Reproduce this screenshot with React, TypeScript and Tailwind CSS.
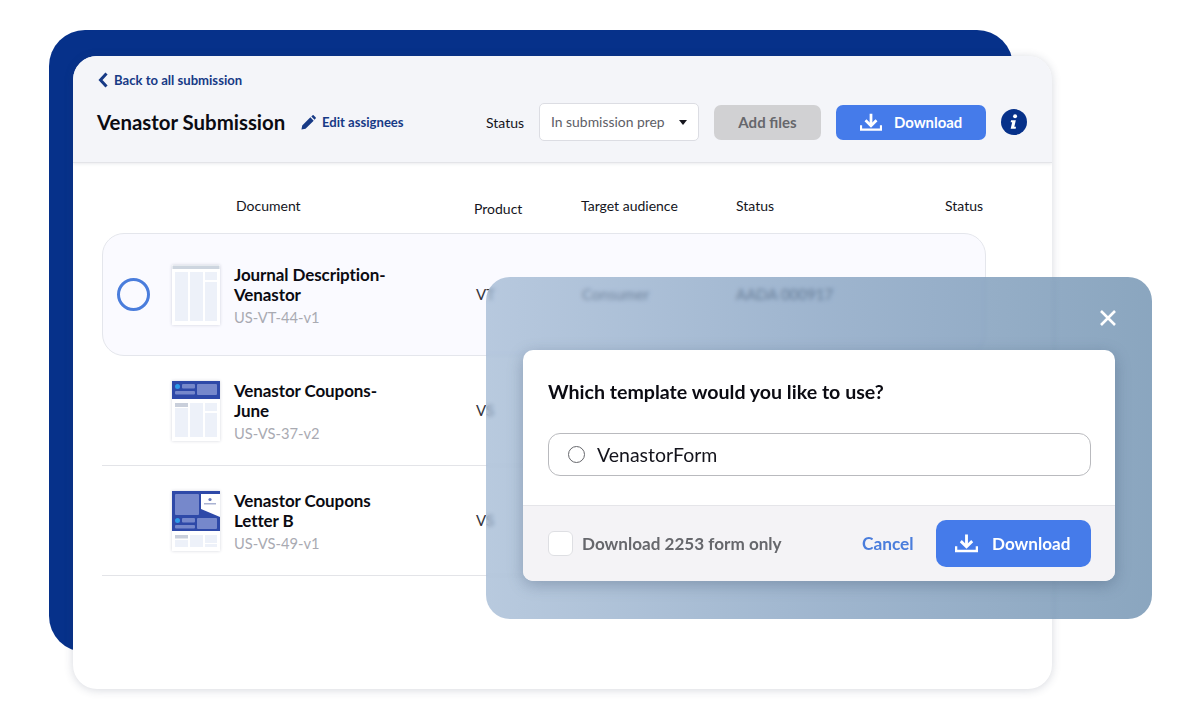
import React from "react";

const DownloadIcon = ({ className }: { className: string }) => (
  <svg viewBox="0 0 24 20" className={className} fill="none" stroke="currentColor" strokeWidth="3">
    <path d="M12 0.5V12.5" />
    <path d="M6 7.5L12 13.5L18 7.5" />
    <path d="M1 13V17.8H23V13" strokeWidth="2.6" />
  </svg>
);

const Thumb = ({ kind }: { kind: 0 | 1 | 2 }) => {
  if (kind === 0)
    return (
      <svg viewBox="0 0 48 60" className="w-12 h-[60px] shrink-0">
        <rect width="48" height="60" fill="#fff" />
        <rect x="0.5" y="0.5" width="47" height="3.5" fill="#cdd5df" />
        <rect x="3" y="7" width="13" height="49" fill="#edf1f9" />
        <rect x="18" y="7" width="13" height="49" fill="#edf1f9" />
        <rect x="33" y="7" width="12" height="8" fill="#edf1f9" />
        <rect x="33" y="17" width="12" height="39" fill="#edf1f9" />
      </svg>
    );
  if (kind === 1)
    return (
      <svg viewBox="0 0 48 60" className="w-12 h-[60px] shrink-0">
        <rect width="48" height="60" fill="#fff" />
        <rect width="48" height="18" fill="#2e49a8" />
        <circle cx="5.5" cy="5.5" r="2.5" fill="#2f9be8" />
        <rect x="10" y="3" width="13" height="4.5" rx="1" fill="#7688cb" />
        <rect x="3" y="10" width="20" height="3.5" rx="1" fill="#7688cb" />
        <rect x="25" y="3" width="20" height="11" rx="1" fill="#7688cb" />
        <rect x="3" y="22" width="13" height="4" fill="#c9cfdb" />
        <rect x="3" y="27" width="13" height="29" fill="#edf1f9" />
        <rect x="18" y="22" width="13" height="34" fill="#edf1f9" />
        <rect x="33" y="22" width="12" height="8" fill="#edf1f9" />
        <rect x="33" y="32" width="12" height="24" fill="#edf1f9" />
      </svg>
    );
  return (
    <svg viewBox="0 0 48 60" className="w-12 h-[60px] shrink-0">
      <rect width="48" height="60" fill="#fff" />
      <rect width="48" height="40" fill="#2e49a8" />
      <rect x="3" y="3" width="24" height="21" rx="1" fill="#7688cb" />
      <path d="M29 3H48V26L29 18Z" fill="#fff" />
      <circle cx="38" cy="8.5" r="1.6" fill="#6878b8" />
      <rect x="32" y="12" width="12" height="1.5" fill="#a9b2d2" />
      <circle cx="5.5" cy="29.5" r="2.5" fill="#2f9be8" />
      <rect x="10" y="27" width="13" height="4.5" rx="1" fill="#7688cb" />
      <rect x="3" y="34" width="20" height="3.5" rx="1" fill="#7688cb" />
      <rect x="25" y="27" width="20" height="11" rx="1" fill="#7688cb" />
      <rect x="3" y="44" width="13" height="3.5" fill="#c9cfdb" />
      <rect x="3" y="49" width="13" height="7" fill="#edf1f9" />
      <rect x="18" y="44" width="13" height="12" fill="#edf1f9" />
      <rect x="33" y="44" width="12" height="8" fill="#edf1f9" />
      <rect x="33" y="53" width="12" height="3" fill="#edf1f9" />
    </svg>
  );
};

const DocCell = ({ kind, l1, l2, id }: { kind: 0 | 1 | 2; l1: string; l2: string; id: string }) => (
  <div className="flex items-center gap-[14px] w-[304px] shrink-0">
    <div className="shadow-[0_0_3px_rgba(60,70,100,0.22)]">
      <Thumb kind={kind} />
    </div>
    <div className="pt-[3px]">
      <div className="text-[17px] leading-[20px] font-bold text-[#0b0b12] tracking-[-0.1px]">{l1}</div>
      <div className="text-[17px] leading-[20px] font-bold text-[#0b0b12] tracking-[-0.1px]">{l2}</div>
      <div className="text-[14.7px] leading-[20px] mt-[2px] text-[#a9aab2]">{id}</div>
    </div>
  </div>
);

export default function App() {
  return (
    <div className="relative w-[1200px] h-[720px] overflow-hidden bg-white pl-[49px] pt-[30px] font-['Lato',sans-serif]">
      <div className="w-[964px] h-[622px] rounded-[36px] bg-[#06318a] pl-6 pt-[26px]">
        <div className="w-[979px] h-[633px] rounded-[24px] bg-white shadow-[0_1px_10px_rgba(50,60,90,0.2)] overflow-hidden">
          <header className="h-[107px] bg-[#f4f5f9] border-b border-[#e3e4e8] shadow-[0_1px_3px_rgba(50,60,90,0.1)] pl-[25px] pt-[15px]">
            <div className="flex items-center gap-[6px] text-[13.1px] leading-[18px] font-bold text-[#173a86]">
              <svg viewBox="0 0 10 16" className="w-[10px] h-[16px]" fill="none" stroke="currentColor" strokeWidth="3">
                <path d="M8.5 1.5L2.5 8L8.5 14.5" />
              </svg>
              Back to all submission
            </div>
            <div className="flex items-center mt-[15px] h-[36px] -ml-px">
              <div className="text-[20.4px] font-bold text-[#0b0b12] w-[204px] whitespace-nowrap">Venastor Submission</div>
              <svg viewBox="0 0 16 16" className="w-[15px] h-[15px] text-[#173a86]" fill="currentColor">
                <path d="M0.5 15.5L1.3 11.2L10 2.5L13.5 6L4.8 14.7ZM11 1.5L12.2 0.4C12.6 0 13.2 0 13.6 0.4L15.6 2.4C16 2.8 16 3.4 15.6 3.8L14.5 5Z" />
              </svg>
              <div className="ml-[6px] w-[164px] pt-px text-[13.1px] font-bold text-[#173a86]">Edit assignees</div>
              <div className="text-[14px] text-[#14141c] w-[53px]">Status</div>
              <div className="flex items-center justify-between w-[160px] h-[38px] rounded-[5px] border border-[#dcdde3] bg-white pl-[11px] pr-[11px] text-[13.9px] text-[#5d5e66]">
                In submission prep
                <span className="w-0 h-0 border-x-[4px] border-x-transparent border-t-[5px] border-t-[#16161e]" />
              </div>
              <div className="ml-[15px] flex items-center justify-center w-[107px] h-[35px] rounded-[7px] bg-[#d1d1d3] text-[15px] font-bold text-[#66676c]">
                Add files
              </div>
              <div className="ml-[15px] flex items-center w-[150px] h-[35px] rounded-[7px] bg-[#457bea] pl-[24px] text-[14.9px] font-bold text-white">
                <DownloadIcon className="w-[22px] h-[19px] mr-[12px]" />
                Download
              </div>
              <div className="ml-[15px] flex items-center justify-center w-[26px] h-[26px] rounded-full bg-[#06318a] text-white">
                <svg viewBox="0 0 12 20" className="w-[10px] h-[18px]" fill="currentColor">
                  <circle cx="7.3" cy="3" r="2.4" />
                  <path d="M2.5 8H8.2L6.4 15.8H8.4L8 18H2L3.8 10.2H2Z" />
                </svg>
              </div>
            </div>
          </header>

          <div className="pl-[29px] w-[913px]">
            <div className="flex h-[70px] text-[14px] text-[#14141c]">
              <div className="w-[372px] pl-[134px] pt-[32px]">Document</div>
              <div className="w-[107px] pt-[35px]">Product</div>
              <div className="w-[155px] pt-[32px]">Target audience</div>
              <div className="w-[209px] pt-[32px]">Status</div>
              <div className="pt-[32px]">Status</div>
            </div>

            <div className="flex items-center h-[123px] rounded-[22px] border border-[#e4e6ec] bg-[#fafaff] pl-[14px]">
              <span className="w-[33px] h-[33px] rounded-full border-[3px] border-[#4a7ddc] mr-[22px] shrink-0" />
              <DocCell kind={0} l1="Journal Description-" l2="Venastor" id="US-VT-44-v1" />
              <div className="text-[15px] text-[#33343c] w-[106px]">VT</div>
              <div className="text-[15px] text-[#33343c] w-[154px]">Consumer</div>
              <div className="text-[15px] text-[#33343c]">AADA 000917</div>
            </div>

            <div className="flex items-center h-[110px] border-b border-[#e3e4e8] pl-[70px]">
              <DocCell kind={1} l1="Venastor Coupons-" l2="June" id="US-VS-37-v2" />
              <div className="text-[15px] text-[#33343c]">VS</div>
            </div>
            <div className="flex items-center h-[110px] border-b border-[#e3e4e8] pl-[70px]">
              <DocCell kind={2} l1="Venastor Coupons" l2="Letter B" id="US-VS-49-v1" />
              <div className="text-[15px] text-[#33343c]">VS</div>
            </div>
          </div>
        </div>
      </div>

      <div className="absolute left-[486px] top-[277px] w-[666px] h-[342px] rounded-[24px] backdrop-blur-[2px] bg-gradient-to-r from-[#9ab3d0b3] via-[#7797bab3] to-[#5980a4b3] pl-[37px] pt-[73px]">
        <svg viewBox="0 0 18 18" className="absolute right-[35px] top-[32px] w-[18px] h-[18px] text-white" fill="none" stroke="currentColor" strokeWidth="2.6">
          <path d="M2 2L16 16M16 2L2 16" />
        </svg>
        <div className="w-[592px] h-[231px] rounded-[10px] bg-white overflow-hidden shadow-[0_4px_16px_rgba(40,60,90,0.3)]">
          <div className="h-[155px] pl-[25px] pr-[24px] pt-[29px]">
            <div className="text-[19.6px] leading-[26px] font-bold text-[#0b0b12]">Which template would you like to use?</div>
            <div className="mt-[28px] flex items-center h-[43px] rounded-[12px] border border-[#b9babe] pl-[19px] text-[19.5px] text-[#14141c]">
              <span className="w-[17px] h-[17px] rounded-full border-[1.5px] border-[#66676c] mr-[12px]" />
              VenastorForm
            </div>
          </div>
          <div className="flex items-center h-[76px] bg-[#f4f3f6] border-t border-[#e5e5e9] pl-[25px]">
            <span className="w-[25px] h-[25px] rounded-[6px] border border-[#dedfe3] bg-white mr-[9px]" />
            <div className="text-[17.1px] font-bold text-[#66676c] w-[280px]">Download 2253 form only</div>
            <div className="text-[17.3px] font-bold text-[#4a7ddc] w-[74px]">Cancel</div>
            <div className="flex items-center w-[155px] h-[47px] rounded-[10px] bg-[#457bea] pl-[19px] text-[17.1px] font-bold text-white">
              <DownloadIcon className="w-[23px] h-[19px] mr-[14px]" />
              Download
            </div>
          </div>
        </div>
      </div>
    </div>
  );
}
